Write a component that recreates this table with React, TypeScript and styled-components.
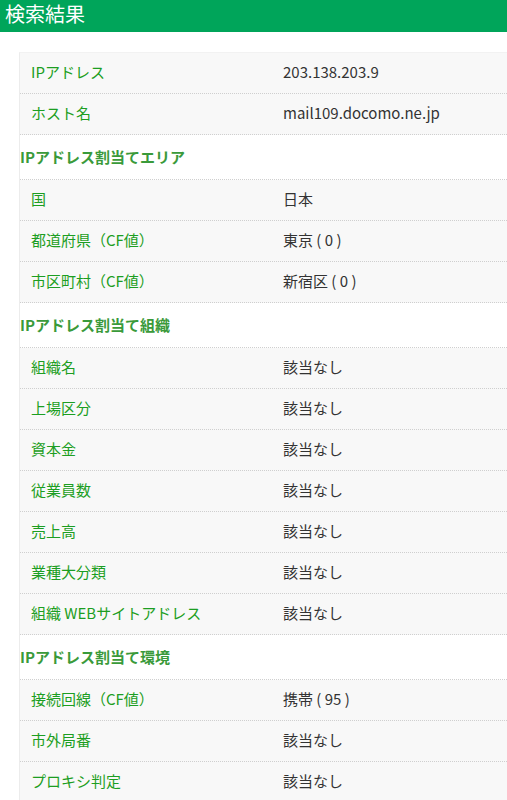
import React from "react";
import styled, { createGlobalStyle } from "styled-components";

const GlobalStyle = createGlobalStyle`
  html, body { margin: 0; padding: 0; background: #fff; }
  body { font-family: "Noto Sans CJK JP", "Noto Sans", sans-serif; }
`;

const Header = styled.header`
  background: #00a55a;
  height: 32px;
  display: flex;
  align-items: center;
  padding-left: 5px;
`;

const Title = styled.h1`
  margin: 0;
  color: #fff;
  font-size: 20px;
  font-weight: 400;
  line-height: 1;
  margin-top: -5px;
`;

const Content = styled.main`
  padding: 20px 0 0 19px;
`;

const Table = styled.div`
  border-left: 1px solid #ececec;
  border-top: 1px solid #f2f2f2;
  display: flex;
  flex-direction: column;
`;

const Row = styled.div`
  display: grid;
  grid-template-columns: 263px 1fr;
  height: 41px;
  box-sizing: border-box;
  align-items: center;
  background: #f8f8f8;
  border-bottom: 1px dotted #cfcfcf;
  font-size: 15px;
  padding-bottom: 3px;
`;

const Label = styled.div`
  color: #1c9e22;
  padding-left: 11px;
  white-space: nowrap;
`;

const Value = styled.div`
  color: #333;
  white-space: nowrap;
`;

const Section = styled.div`
  height: 45px;
  box-sizing: border-box;
  display: flex;
  align-items: center;
  background: #fff;
  border-bottom: 1px dotted #cfcfcf;
  color: #3a9a3a;
  font-weight: 700;
  font-size: 15px;
  padding-bottom: 1px;
  white-space: nowrap;
`;

type Item = { type: "row"; label: string; value: string } | { type: "section"; title: string };

const items: Item[] = [
  { type: "row", label: "IPアドレス", value: "203.138.203.9" },
  { type: "row", label: "ホスト名", value: "mail109.docomo.ne.jp" },
  { type: "section", title: "IPアドレス割当てエリア" },
  { type: "row", label: "国", value: "日本" },
  { type: "row", label: "都道府県（CF値）", value: "東京 ( 0 )" },
  { type: "row", label: "市区町村（CF値）", value: "新宿区 ( 0 )" },
  { type: "section", title: "IPアドレス割当て組織" },
  { type: "row", label: "組織名", value: "該当なし" },
  { type: "row", label: "上場区分", value: "該当なし" },
  { type: "row", label: "資本金", value: "該当なし" },
  { type: "row", label: "従業員数", value: "該当なし" },
  { type: "row", label: "売上高", value: "該当なし" },
  { type: "row", label: "業種大分類", value: "該当なし" },
  { type: "row", label: "組織 WEBサイトアドレス", value: "該当なし" },
  { type: "section", title: "IPアドレス割当て環境" },
  { type: "row", label: "接続回線（CF値）", value: "携帯 ( 95 )" },
  { type: "row", label: "市外局番", value: "該当なし" },
  { type: "row", label: "プロキシ判定", value: "該当なし" },
];

export default function App() {
  return (
    <>
      <GlobalStyle />
      <Header>
        <Title>検索結果</Title>
      </Header>
      <Content>
        <Table>
          {items.map((it, i) =>
            it.type === "section" ? (
              <Section key={i}>{it.title}</Section>
            ) : (
              <Row key={i}>
                <Label>{it.label}</Label>
                <Value>{it.value}</Value>
              </Row>
            )
          )}
        </Table>
      </Content>
    </>
  );
}
